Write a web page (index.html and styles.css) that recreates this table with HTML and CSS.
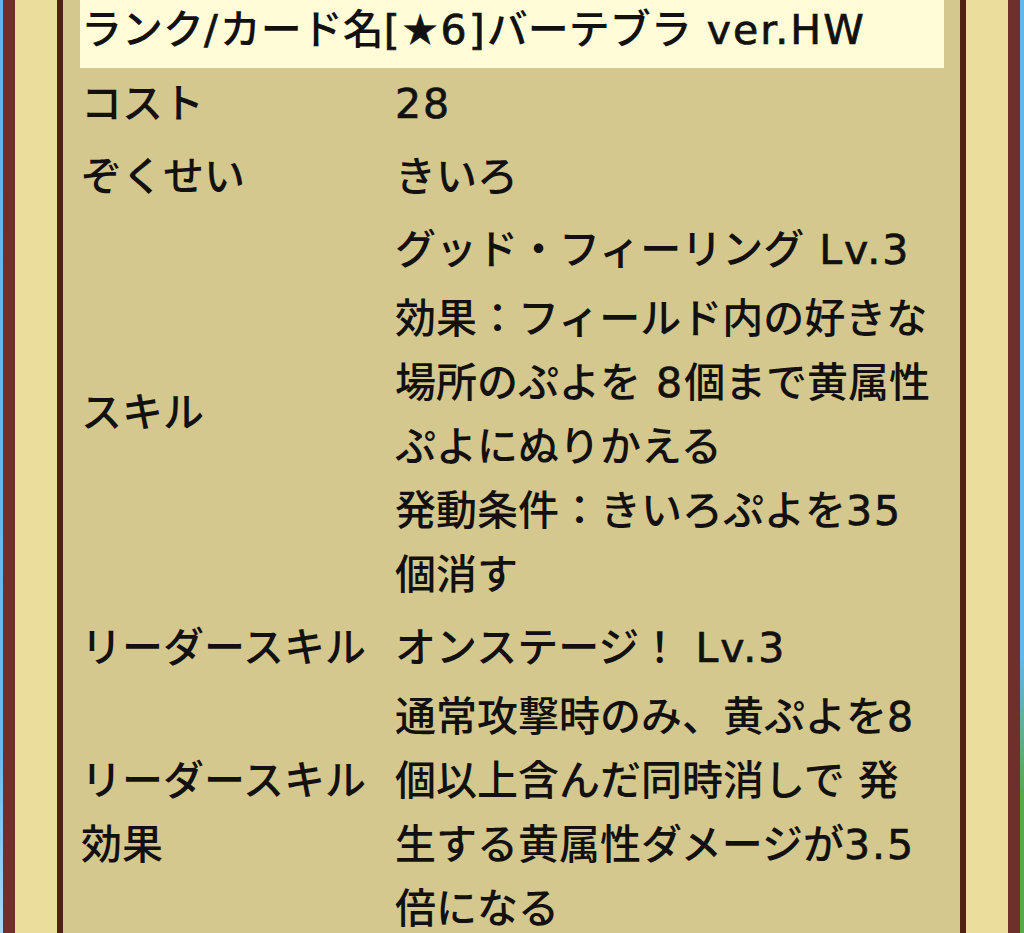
FILE: index.html
```html
<!DOCTYPE html>
<html lang="ja">
<head>
<meta charset="utf-8">
<title>カード情報</title>
<link rel="stylesheet" href="styles.css">
</head>
<body>
<div class="page">
  <div class="edge edge-left"></div>
  <div class="frame">
    <div class="card">
      <div class="title">ランク<span class="lat">/</span>カード名<span class="lat">[★6]</span>バーテブラ<span class="lat"> ver.HW</span></div>
      <div class="table">
        <div class="label">コスト</div>
        <div class="value"><span class="lat">28</span></div>

        <div class="label">ぞくせい</div>
        <div class="value">きいろ</div>

        <div class="label">スキル</div>
        <div class="value">
          <p class="para">グッド・フィーリング<span class="lat"> Lv.3</span></p>
          <p class="para para-gap">効果：フィールド内の好きな<br>場所のぷよを<span class="lat"> 8</span>個まで黄属性<br>ぷよにぬりかえる</p>
          <p class="para">発動条件：きいろぷよを<span class="lat">35</span><br>個消す</p>
        </div>

        <div class="label">リーダースキル</div>
        <div class="value">オンステージ！<span class="lat"> Lv.3</span></div>

        <div class="label row-tight">リーダースキル<br>効果</div>
        <div class="value row-tight">通常攻撃時のみ、黄ぷよを<span class="lat">8</span><br>個以上含んだ同時消しで 発<br>生する黄属性ダメージが<span class="lat">3.5</span><br>倍になる</div>
      </div>
    </div>
  </div>
  <div class="edge edge-right"></div>
</div>
</body>
</html>
```
FILE: styles.css
```css
* {
  box-sizing: border-box;
}

html, body {
  margin: 0;
  padding: 0;
}

body {
  font-family: "DejaVu Sans", "Noto Sans CJK JP", sans-serif;
  font-weight: 500;
  color: #121110;
  background: #62b7ea;
}

.page {
  display: flex;
  height: 933px;
  overflow: hidden;
}

.edge {
  flex: none;
}

.edge-left {
  width: 3px;
  background: linear-gradient(to bottom, #5fb6ea 0%, #64bbec 80%, #a9d8f0 100%);
}

.edge-right {
  width: 4px;
  background: linear-gradient(to bottom, #63b9ec 0%, #63b9ec 70%, #5aa84a 85%, #5aa84a 100%);
}

.frame {
  flex: 1;
  display: flex;
  background: #ebdd9b;
  border-left: 12px solid #6f2f2a;
  border-right: 12px solid #6f2f2a;
  padding: 0 42px;
}

.card {
  flex: 1;
  background: #d4c88f;
  border-left: 6px solid #4f2310;
  border-right: 6px solid #4f2310;
  padding: 0 16px 0 17px;
}

.title {
  height: 68px;
  background: #fffcd7;
  font-size: 41px;
  line-height: 61px;
  white-space: nowrap;
  padding-left: 1px;
}

.lat {
  font-weight: 400;
  letter-spacing: 2px;
  -webkit-text-stroke: 0.7px currentColor;
}

.table {
  display: grid;
  grid-template-columns: 315px 1fr;
  row-gap: 9px;
  margin-top: 4px;
  font-size: 41px;
  line-height: 64px;
}

.label {
  align-self: center;
  white-space: nowrap;
  padding-left: 1px;
}

.value {
  white-space: nowrap;
}

.row-tight {
  margin-top: -4px;
}

.para {
  margin: 0;
}

.para-gap {
  margin-top: 5px;
}
```
